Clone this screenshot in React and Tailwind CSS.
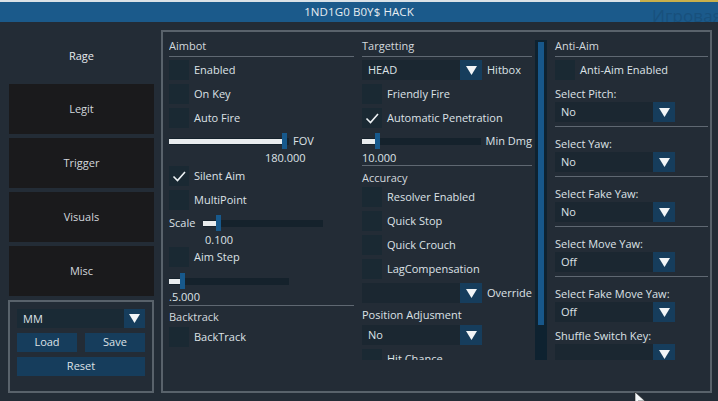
import React from "react";

const Arrow = () => (
  <svg width="11" height="9" viewBox="0 0 11 9">
    <polygon points="0,0 11,0 5.5,9" fill="#f2f5f7" />
  </svg>
);

const Check = () => (
  <svg width="20" height="20" viewBox="0 0 20 20">
    <path d="M4.5 10.5 L8.5 14.5 L16 6" stroke="#eef2f5" strokeWidth="1.6" fill="none" />
  </svg>
);

const Checkbox = ({ label, checked, className = "" }) => (
  <div className={`flex items-center h-[20px] shrink-0 gap-[5px] ${className}`}>
    <div className="w-[20px] h-[20px] bg-[#1a2933] flex items-center justify-center shrink-0">
      {checked && <Check />}
    </div>
    <span className="whitespace-nowrap">{label}</span>
  </div>
);

const Dropdown = ({ value, w = "w-[120px]", className = "" }) => (
  <div className={`flex h-[20px] shrink-0 bg-[#1b2731] ${w} ${className}`}>
    <div className="flex-1 pl-[6px] leading-[20px]">{value}</div>
    <div className="w-[22px] bg-[#163d5c] flex items-center justify-center">
      <Arrow />
    </div>
  </div>
);

const Slider = ({ fill, w = "w-[120px]" }) => (
  <div className={`relative h-[7px] bg-[#15222c] ${w}`}>
    <div className="absolute left-0 top-[1px] h-[5px] bg-[#e9ecee]" style={{ width: fill }} />
    <div
      className="absolute top-[-5px] w-[5px] h-[16px] bg-[#17598c]"
      style={{ left: fill }}
    />
  </div>
);

const Header = ({ children }) => (
  <div className="h-[21px] shrink-0 flex items-center border-b border-[#5f6872] text-[#d3d9de]">
    {children}
  </div>
);

// label + dropdown block of the anti-aim column, 50px pitch
const Group = ({ label, value, first, last }) => (
  <div className={`shrink-0 ${first ? "pt-[5px]" : "pt-[8px]"} ${last ? "" : "pb-[4px] border-b border-[#5f6872]"}`}>
    <div className="h-[17px] leading-[17px] whitespace-nowrap">{label}</div>
    <Dropdown value={value} />
  </div>
);

const tabs = ["Rage", "Legit", "Trigger", "Visuals", "Misc"];

export default function App() {
  return (
    <div
      className="relative w-[718px] h-[401px] overflow-hidden bg-[#232c36] text-[#dde2e7] text-[11px]"
      style={{ fontFamily: '"Open Sans", "DejaVu Sans", sans-serif' }}
    >
      <div className="flex h-[2px]">
        <div className="flex-1 bg-[#dbe2e7]" />
        <div className="w-[78px] bg-[#c9b04c]" />
      </div>
      <div className="relative h-[20px] bg-[#1b5a8b] flex items-center justify-center text-[#e8edf1] text-[11.5px] tracking-[0.1px] overflow-hidden">
        1ND1G0 B0Y$ HACK
        <span className="absolute left-[652px] top-[4px] text-[17px] leading-[20px] text-[#18507c] whitespace-nowrap">Игровая</span>
      </div>

      <div className="flex pt-[8px]">
        {/* sidebar */}
        <div className="w-[161px] pl-[8px] flex flex-col gap-[4px]">
          {tabs.map((t, i) => (
            <div
              key={t}
              className={`ml-[1px] w-[145px] h-[50px] flex items-center justify-center ${
                i === 0 ? "text-[#e6eaee] pt-[2px]" : "bg-[#1a1a1c] text-[#d2d7dc]"
              }`}
            >
              {t}
            </div>
          ))}
          <div className="w-[146px] h-[93px] border-2 border-[#59626b] pt-[7px] pl-[7px] flex flex-col gap-[5px]">
            <div className="flex h-[19px] w-[128px] bg-[#1a2a35]">
              <div className="flex-1 pl-[6px] leading-[19px]">MM</div>
              <div className="w-[21px] bg-[#163d5c] flex items-center justify-center">
                <Arrow />
              </div>
            </div>
            <div className="flex gap-[8px] w-[128px]">
              <div className="w-[60px] h-[19px] bg-[#163d5c] flex items-center justify-center">Load</div>
              <div className="w-[60px] h-[19px] bg-[#163d5c] flex items-center justify-center">Save</div>
            </div>
            <div className="w-[128px] h-[19px] bg-[#163d5c] flex items-center justify-center">Reset</div>
          </div>
        </div>

        {/* main panel */}
        <div className="w-[551px] h-[363px] border-2 border-[#59626b] pl-[6px]">
          <div className="flex items-start h-[328px] overflow-hidden pt-[4px]">
            {/* col 1 */}
            <div className="w-[185px] flex flex-col">
              <Header>Aimbot</Header>
              <Checkbox label="Enabled" className="mt-[3px]" />
              <Checkbox label="On Key" className="mt-[4px]" />
              <Checkbox label="Auto Fire" className="mt-[4px]" />
              <div className="mt-[5px] h-[16px] flex items-center gap-[4px]">
                <Slider fill={113} />
                <span>FOV</span>
              </div>
              <div className="mt-[1px] h-[15px] leading-[15px] pl-[96px]">180.000</div>
              <Checkbox label="Silent Aim" checked className="mt-[1px]" />
              <Checkbox label="MultiPoint" className="mt-[4px]" />
              <div className="mt-[4px] h-[18px] flex items-center">
                <span className="w-[34px]">Scale</span>
                <Slider fill={13} />
              </div>
              <div className="h-[15px] leading-[15px] pl-[36px]">0.100</div>
              <Checkbox label="Aim Step" />
              <div className="mt-[7px] h-[14px] flex items-center">
                <Slider fill={11} />
              </div>
              <div className="mt-[2px] h-[14px] leading-[14px]">.5.000</div>
              <div className="mt-[1px] border-t border-[#5f6872]" />
              <div className="mt-[4px] h-[14px] leading-[14px] text-[#d3d9de]">Backtrack</div>
              <Checkbox label="BackTrack" className="mt-[3px]" />
            </div>

            {/* col 2 */}
            <div className="ml-[8px] w-[170px] flex flex-col">
              <Header>Targetting</Header>
              <div className="mt-[3px] flex items-center gap-[5px]">
                <Dropdown value="HEAD" />
                <span>Hitbox</span>
              </div>
              <Checkbox label="Friendly Fire" className="mt-[4px]" />
              <Checkbox label="Automatic Penetration" checked className="mt-[4px]" />
              <div className="mt-[5px] h-[16px] flex items-center gap-[5px]">
                <Slider fill={13} />
                <span className="whitespace-nowrap">Min Dmg</span>
              </div>
              <div className="mt-[1px] h-[15px] leading-[15px]">10.000</div>
              <div className="border-t border-[#5f6872]" />
              <div className="mt-[4px] h-[15px] leading-[15px] text-[#d3d9de]">Accuracy</div>
              <Checkbox label="Resolver Enabled" className="mt-[2px]" />
              <Checkbox label="Quick Stop" className="mt-[4px]" />
              <Checkbox label="Quick Crouch" className="mt-[4px]" />
              <Checkbox label="LagCompensation" className="mt-[4px]" />
              <div className="mt-[4px] flex items-center gap-[5px]">
                <Dropdown value="" />
                <span>Override</span>
              </div>
              <div className="mt-[4px] h-[16px] leading-[16px] whitespace-nowrap">Position Adjusment</div>
              <Dropdown value="No" className="mt-[2px]" />
              <Checkbox label="Hit Chance" className="mt-[4px]" />
            </div>

            {/* scrollbar */}
            <div className="ml-[3px] mt-[4px] w-[12px] h-[320px] bg-[#0e2230] px-[3px] pt-[2px]">
              <div className="h-[283px] bg-[#17578a]" />
            </div>

            {/* col 3 */}
            <div className="ml-[8px] w-[153px] flex flex-col">
              <Header>Anti-Aim</Header>
              <Checkbox label="Anti-Aim Enabled" className="mt-[3px]" />
              <Group label="Select Pitch:" value="No" first />
              <Group label="Select Yaw:" value="No" />
              <Group label="Select Fake Yaw:" value="No" />
              <Group label="Select Move Yaw:" value="Off" />
              <Group label="Select Fake Move Yaw:" value="Off" last />
              <Group label="Shuffle Switch Key:" value="" first last />
            </div>
          </div>
        </div>
      </div>

      <svg className="absolute left-[634px] top-[392px]" width="12" height="12" viewBox="0 0 12 12">
        <polygon points="1,0 1,12 4,9 11,9" fill="#f4f6f8" stroke="#222" strokeWidth="0.6" />
      </svg>
    </div>
  );
}
